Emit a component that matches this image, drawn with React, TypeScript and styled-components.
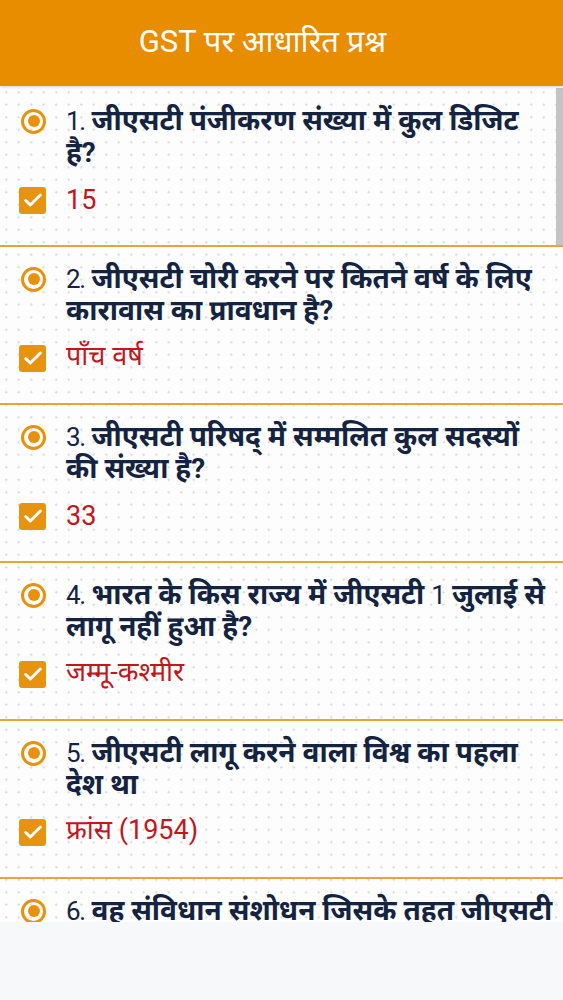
import styled, { createGlobalStyle } from "styled-components";

const GlobalStyle = createGlobalStyle`
  html, body {
    margin: 0;
    padding: 0;
    background: #f7f8fa;
  }
  body {
    font-family: Roboto, "Noto Sans Devanagari", "Noto Sans", sans-serif;
  }
`;

const Page = styled.div`
  width: 563px;
  height: 1000px;
  display: flex;
  flex-direction: column;
  overflow: hidden;
  background: #f7f8fa;
`;

const Header = styled.header`
  height: 86px;
  flex-shrink: 0;
  display: flex;
  justify-content: center;
  align-items: center;
  padding: 2px 38px 0 0;
  box-sizing: border-box;
  background-color: #e88c00;
  color: #ffffff;
  font-size: 31px;
  box-shadow: 0 1px 3px rgba(0, 0, 0, 0.18);
  position: relative;
  z-index: 2;
`;

const Viewport = styled.div`
  position: relative;
  height: 836px;
  flex-shrink: 0;
  overflow: hidden;
  background-color: #fdfdfe;
  background-image: radial-gradient(circle, #d6d8dd 0.9px, transparent 1.3px);
  background-size: 12.5px 12.5px;
`;

const Scrollbar = styled.div`
  position: absolute;
  top: 2px;
  right: 0;
  width: 7px;
  height: 157px;
  background: #c4c4c4;
`;

const List = styled.div`
  padding-top: 3px;
`;

const Item = styled.div`
  height: 158px;
  box-sizing: border-box;
  padding: 16px 0 0 0;
  border-bottom: 2px solid #e9a437;
`;

const QuestionRow = styled.div`
  display: flex;
  align-items: flex-start;
`;

const RadioCol = styled.div`
  width: 66px;
  flex-shrink: 0;
  height: 32px;
  display: flex;
  align-items: center;
  padding-left: 21px;
  box-sizing: border-box;
`;

const Radio = styled.span`
  width: 25px;
  height: 25px;
  border-radius: 50%;
  border: 3.5px solid #e8910c;
  box-sizing: border-box;
  display: flex;
  align-items: center;
  justify-content: center;

  &::after {
    content: "";
    width: 12px;
    height: 12px;
    border-radius: 50%;
    background: #e8910c;
  }
`;

const Question = styled.div`
  flex: 1;
  font-size: 28px;
  line-height: 32px;
  color: #14233f;
  font-weight: 700;
  height: 64px;
`;

const Line = styled.div`
  white-space: nowrap;
`;

const Num = styled.span`
  font-weight: 400;
  font-size: 26px;
  letter-spacing: -1.5px;
  margin-right: 7px;
`;

const Digit = styled.span`
  font-weight: 400;
  font-size: 26px;
  letter-spacing: -1px;
`;

const AnswerRow = styled.div`
  display: flex;
  align-items: center;
  margin-top: 17px;
  height: 28px;
`;

const CheckCol = styled.div`
  width: 66px;
  flex-shrink: 0;
  padding-left: 19px;
  box-sizing: border-box;
  display: flex;
`;

const Check = styled.span`
  width: 27px;
  height: 27px;
  border-radius: 3px;
  background: #e8930f;
  display: flex;
  align-items: center;
  justify-content: center;
`;

const Answer = styled.div`
  font-size: 27px;
  color: #c4151c;
`;

const BottomSpace = styled.div`
  flex: 1;
  background: #f7f8fa;
`;

const items = [
  { q: ["जीएसटी पंजीकरण संख्या में कुल डिजिट", "है?"], a: "15" },
  { q: ["जीएसटी चोरी करने पर कितने वर्ष के लिए", "कारावास का प्रावधान है?"], a: "पाँच वर्ष" },
  { q: ["जीएसटी परिषद् में सम्मलित कुल सदस्यों", "की संख्या है?"], a: "33" },
  { q: ["भारत के किस राज्य में जीएसटी 1 जुलाई से", "लागू नहीं हुआ है?"], a: "जम्मू-कश्मीर" },
  { q: ["जीएसटी लागू करने वाला विश्व का पहला", "देश था"], a: "फ्रांस (1954)" },
  { q: ["वह संविधान संशोधन जिसके तहत जीएसटी", "लागू किया गया है?"], a: "101वाँ" },
];

// digits inside the bold question show in the regular latin face
function withDigits(text: string) {
  return text.split(/(\d+)/).map((part, i) =>
    /^\d+$/.test(part) ? <Digit key={i}>{part}</Digit> : part
  );
}

function CheckMark() {
  return (
    <svg width="22" height="22" viewBox="0 0 24 24" fill="none">
      <path d="M4 12.5l5 5L20 6.5" stroke="#fff" strokeWidth="3.2" strokeLinecap="round" strokeLinejoin="round" />
    </svg>
  );
}

export default function App() {
  return (
    <Page>
      <GlobalStyle />
      <Header>GST पर आधारित प्रश्न</Header>
      <Viewport>
        <Scrollbar />
        <List>
          {items.map((item, i) => (
            <Item key={i}>
              <QuestionRow>
                <RadioCol>
                  <Radio />
                </RadioCol>
                <Question>
                  <Line>
                    <Num>{i + 1}.</Num>
                    {withDigits(item.q[0])}
                  </Line>
                  <Line>{item.q[1]}</Line>
                </Question>
              </QuestionRow>
              <AnswerRow>
                <CheckCol>
                  <Check>
                    <CheckMark />
                  </Check>
                </CheckCol>
                <Answer>{item.a}</Answer>
              </AnswerRow>
            </Item>
          ))}
        </List>
      </Viewport>
      <BottomSpace />
    </Page>
  );
}
